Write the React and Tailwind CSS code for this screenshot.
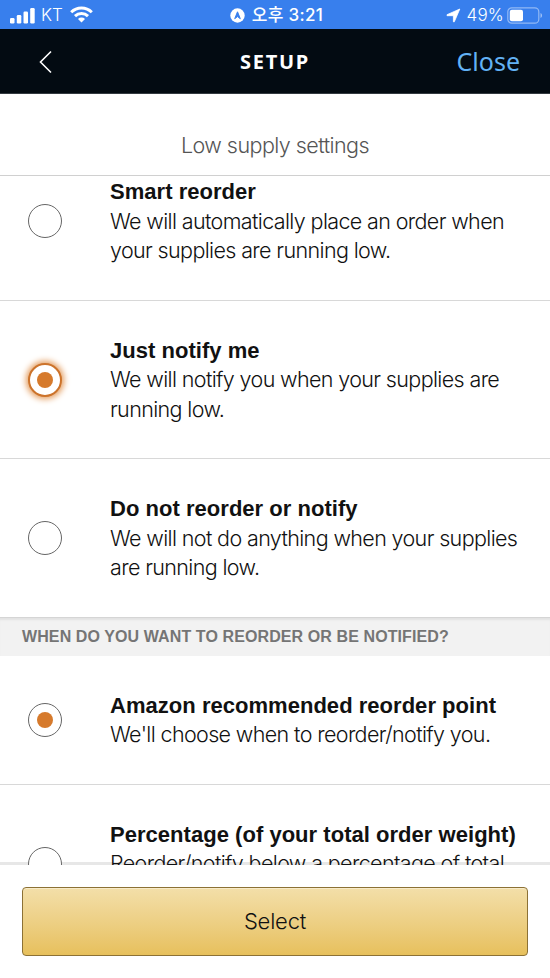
import { useState } from 'react'

const REORDER_OPTIONS = [
  { id: 'smart', title: 'Smart reorder', lines: ['We will automatically place an order when', 'your supplies are running low.'] },
  { id: 'notify', title: 'Just notify me', lines: ['We will notify you when your supplies are', 'running low.'] },
  { id: 'none', title: 'Do not reorder or notify', lines: ['We will not do anything when your supplies', 'are running low.'] },
]

const POINT_OPTIONS = [
  { id: 'recommended', title: 'Amazon recommended reorder point', lines: ["We'll choose when to reorder/notify you."] },
  { id: 'percentage', title: 'Percentage (of your total order weight)', lines: ['Reorder/notify below a percentage of total'], tall: true },
]

function StatusBar() {
  return (
    <div className="h-[29px] shrink-0 bg-[#387fed] text-white flex items-center justify-between pl-[10px] pr-[7px] pt-[2px] font-['Inter','Noto_Sans_CJK_KR',sans-serif] text-[17px]">
      <div className="flex items-center w-[172px]">
        <svg className="-mt-px" width="26" height="17" viewBox="0 0 26 17" fill="currentColor">
          <rect x="0" y="11" width="4.5" height="5.5" rx="1.2" />
          <rect x="6.8" y="8" width="4.5" height="8.5" rx="1.2" />
          <rect x="13.5" y="4.5" width="4.5" height="12" rx="1.2" />
          <rect x="20.2" y="1" width="4.5" height="15.5" rx="1.2" />
        </svg>
        <span className="ml-[5px] font-light">KT</span>
        <svg className="ml-[7px] -mt-[3px]" width="23" height="17" viewBox="0 0 23 17" fill="none" stroke="currentColor" strokeWidth="3">
          <path d="M1.2 6.2a14.7 14.7 0 0 1 20.6 0" />
          <path d="M5 10.1a9.3 9.3 0 0 1 13 0" />
          <path d="M8 12.9a5 5 0 0 1 7 0L11.5 16.5z" fill="currentColor" stroke="none" />
        </svg>
      </div>
      <div className="flex items-center gap-[7px]">
        <svg width="15" height="15" viewBox="0 0 15 15">
          <circle cx="7.5" cy="7.5" r="7.2" fill="#fff" />
          <path d="M7.5 3.8 10.3 10.7 7.5 8.6 4.7 10.7z" fill="#387fed" stroke="#387fed" strokeWidth="1" strokeLinejoin="round" />
        </svg>
        <span className="font-medium leading-none tracking-[0.3px]">오후 3:21</span>
      </div>
      <div className="flex items-center justify-end w-[172px]">
        <svg width="15" height="15" viewBox="0 0 15 15" fill="currentColor" stroke="currentColor" strokeWidth="0.8" strokeLinejoin="round">
          <path d="M13.8 1 8.3 13.8 7.4 13.800V7.700H1V6.700z" />
        </svg>
        <span className="ml-[6px] font-light tracking-[0.2px]">49%</span>
        <svg className="ml-[3px] -mt-px" width="36" height="17" viewBox="0 0 36 17" fill="none">
          <rect x=".8" y=".8" width="31" height="15.4" rx="4" stroke="#fff" strokeOpacity=".45" strokeWidth="1.2" />
          <rect x="2.8" y="2.8" width="13.2" height="11.4" rx="2" fill="#fff" />
          <path d="M33.5 6v5c2.1-.7 2.1-4.3 0-5z" fill="#fff" fillOpacity=".5" />
        </svg>
      </div>
    </div>
  )
}

function Radio({ checked, focused }) {
  return (
    <span
      className={`w-[34px] h-[34px] rounded-full bg-white flex items-center justify-center ${focused ? 'border-2 border-[#cc732b] shadow-[0_0_6px_2px_#e39a5a]' : 'border border-[#666]'}`}
    >
      {checked && <span className="w-[16px] h-[16px] rounded-full bg-[#d67a2c]" />}
    </span>
  )
}

function Option({ option, checked, focused, onSelect, last }) {
  return (
    <button
      type="button"
      onClick={onSelect}
      className={`w-full shrink-0 flex items-center text-left pl-[28px] pt-[35.3px] pb-[34px] ${last ? '' : 'border-b border-[#d8d8d8]'}`}
    >
      <Radio checked={checked} focused={focused} />
      <span className={`ml-[48px] text-[22px] leading-[29.4px] text-[#111] whitespace-nowrap ${option.tall ? 'min-h-[88px]' : ''}`}>
        <span className="block font-bold font-['Liberation_Sans',sans-serif] tracking-[0.03px]">{option.title}</span>
        {option.lines.map(line => (
          <span key={line} className="block text-[21.5px] font-light font-['Inter',sans-serif] tracking-[-0.63px]">{line}</span>
        ))}
      </span>
    </button>
  )
}

export default function App() {
  const [mode, setMode]   = useState('notify')
  const [point, setPoint] = useState('recommended')

  return (
    <div className="w-full h-[978px] bg-white flex flex-col overflow-hidden">
      <StatusBar />
      <header className="h-[65px] shrink-0 bg-[#030b12] border-b border-[#333a40] text-white flex items-center justify-between pl-[38px] pr-[30px] pt-px font-['Noto_Sans',sans-serif]">
        <button type="button" className="w-[80px]">
          <svg width="15" height="24" viewBox="0 0 15 24" fill="none" stroke="currentColor" strokeWidth="1.6">
            <path d="M13 1.5 2.5 12 13 22.5" />
          </svg>
        </button>
        <h1 className="text-[20px] font-bold tracking-[1.7px]">SETUP</h1>
        <button type="button" className="w-[88px] text-right text-[25px] text-[#62b2f4]">Close</button>
      </header>

      <div className="h-[82px] shrink-0 border-b border-[#d0d0d0] flex justify-center pt-[36px] text-[21.5px] leading-[30px] font-light text-[#555] font-['Inter',sans-serif] tracking-[-0.54px]">
        Low supply settings
      </div>

      <main className="relative isolate h-[689px] shrink-0 overflow-hidden flex flex-col">
        <div className="-mt-[34px] shrink-0 flex flex-col">
          {REORDER_OPTIONS.map((o, i) => (
            <Option
              key={o.id}
              option={o}
              checked={mode === o.id}
              focused={mode === o.id}
              onSelect={() => setMode(o.id)}
              last={i === REORDER_OPTIONS.length - 1}
            />
          ))}
        </div>
        <h2 className="h-[39px] shrink-0 bg-[#f2f2f2] border-t border-[#d5d5d5] shadow-[inset_0_3px_2px_-1px_#e2e2e2] pl-[22px] pt-px flex items-center font-bold text-[16px] tracking-[0.1px] text-[#757575] font-['Liberation_Sans',sans-serif]">
          WHEN DO YOU WANT TO REORDER OR BE NOTIFIED?
        </h2>
        {POINT_OPTIONS.map(o => (
          <Option key={o.id} option={o} checked={point === o.id} onSelect={() => setPoint(o.id)} />
        ))}
        <div className="absolute -z-10 bottom-0 left-0 w-full h-[3px] bg-[#e7e7e7]" />
      </main>

      <footer className="grow px-[22px] pt-[22px]">
        <button
          type="button"
          className="w-full h-[69px] rounded-[4px] border border-[#8c7135] bg-linear-to-b from-[#f3dfa9] to-[#e7c05c] shadow-[inset_0_1px_0_#f8ebc8] text-[22px] font-light tracking-[-0.2px] text-[#111] font-['Inter',sans-serif]"
        >
          Select
        </button>
      </footer>
    </div>
  )
}
